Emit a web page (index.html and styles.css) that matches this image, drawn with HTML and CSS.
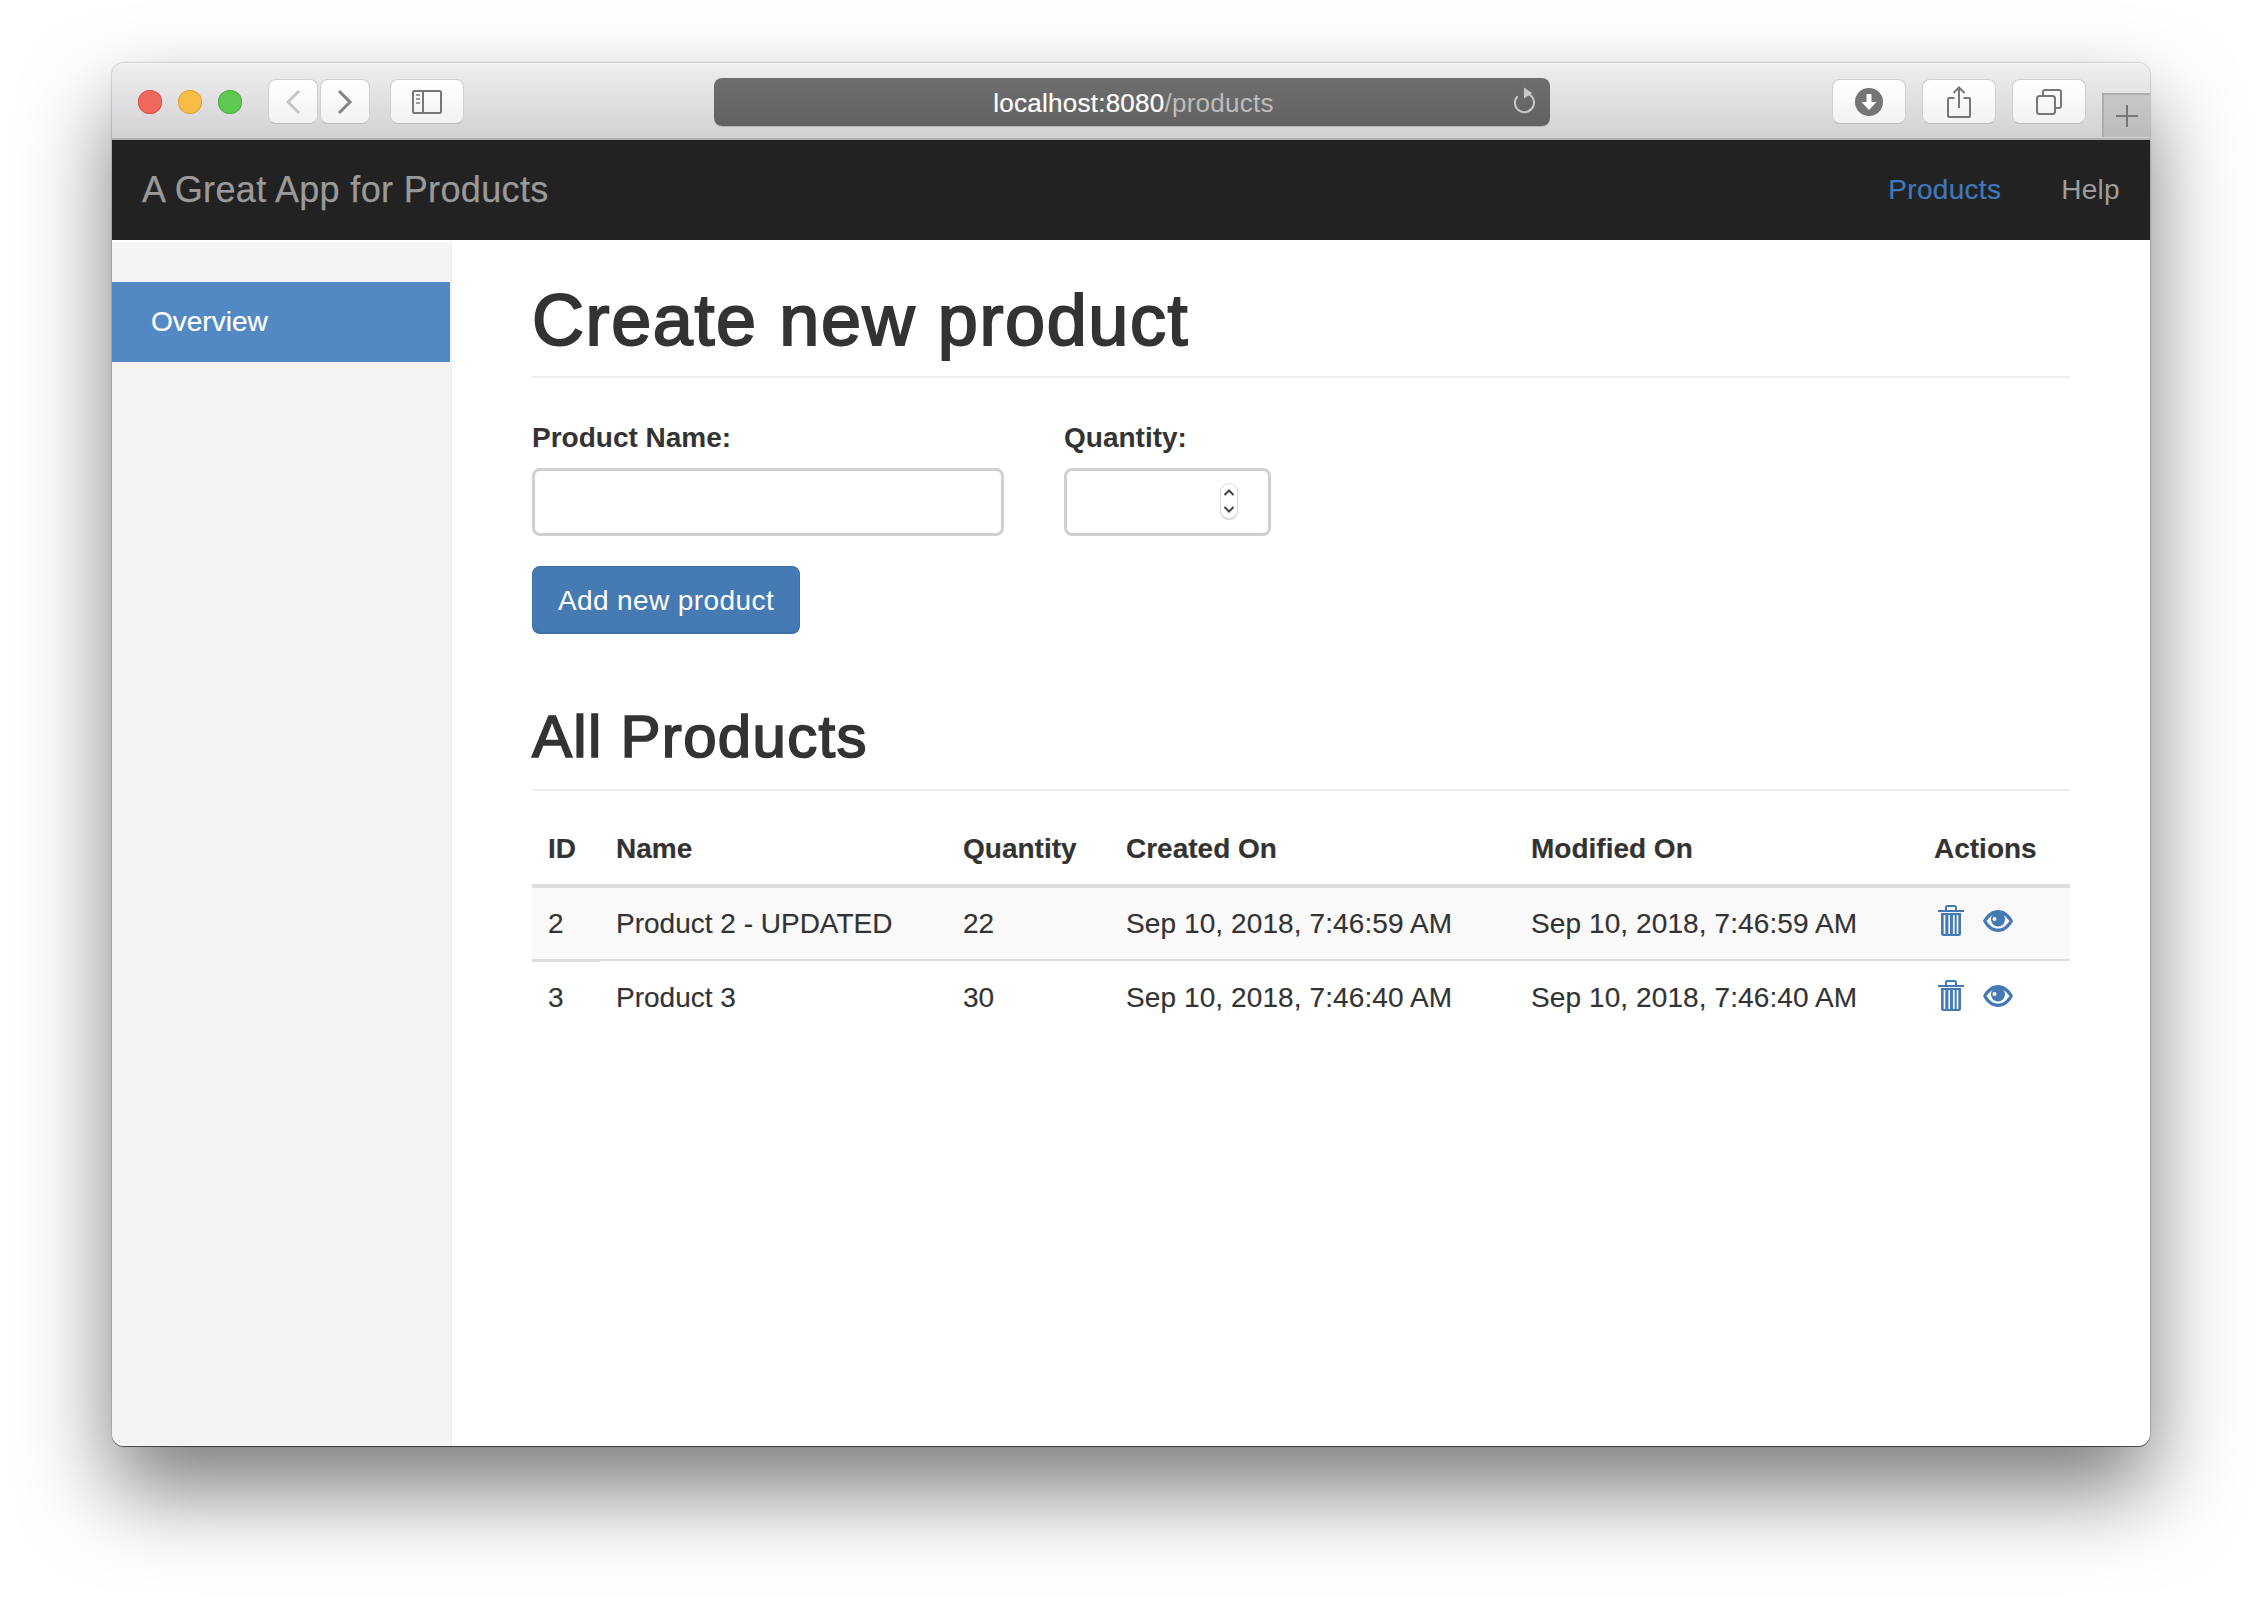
FILE: index.html
```html
<!DOCTYPE html>
<html lang="en">
<head>
<meta charset="utf-8">
<title>A Great App for Products</title>
<link rel="stylesheet" href="styles.css">
</head>
<body>
<div class="window">
  <div class="titlebar">
    <div class="lights">
      <span class="light red"></span><span class="light yellow"></span><span class="light green"></span>
    </div>
    <div class="nav-buttons">
      <div class="tool nav-btn"><svg width="16" height="26" viewBox="0 0 16 26"><path d="M14 2 3 13l11 11" fill="none" stroke="#c6c6c6" stroke-width="3"/></svg></div>
      <div class="tool nav-btn"><svg width="16" height="26" viewBox="0 0 16 26"><path d="M2 2l11 11L2 24" fill="none" stroke="#848484" stroke-width="3"/></svg></div>
    </div>
    <div class="tool side-btn"><svg width="30" height="24" viewBox="0 0 30 24"><rect x="1" y="1" width="28" height="22" rx="1.5" fill="none" stroke="#777" stroke-width="2"/><path d="M11 1v22" stroke="#777" stroke-width="2"/><path d="M4 5h4M4 9h4M4 13h4" stroke="#999" stroke-width="2"/></svg></div>
    <div class="urlbar">
      <span class="url-text">localhost:8080<span class="url-path">/products</span></span>
      <svg class="reload" width="24" height="28" viewBox="0 0 24 28"><path d="M14.500 6.200a9.500 9.500 0 1 1-8 3" fill="none" stroke="#c8c8c8" stroke-width="2"/><path d="M13 0.500l8 5.500-8 5.500z" fill="#c8c8c8"/></svg>
    </div>
    <div class="tools-right">
      <div class="tool wide"><svg width="28" height="28" viewBox="0 0 28 28"><circle cx="14" cy="14" r="14" fill="#757575"/><path d="M11.500 6h5v8h5L14 22 6.500 14h5z" fill="#fff"/></svg></div>
      <div class="tool wide"><svg width="24" height="32" viewBox="0 0 24 32"><path d="M7.500 12H2a1 1 0 0 0-1 1v17a1 1 0 0 0 1 1h20a1 1 0 0 0 1-1V13a1 1 0 0 0-1-1h-5.500M12 22V2M6.500 7 12 1.500 17.500 7" fill="none" stroke="#777" stroke-width="2"/></svg></div>
      <div class="tool wide"><svg width="26" height="26" viewBox="0 0 26 26"><rect x="1" y="7" width="18" height="18" rx="2.500" fill="none" stroke="#777" stroke-width="2"/><path d="M7 6V3a2 2 0 0 1 2-2h14a2 2 0 0 1 2 2v14a2 2 0 0 1-2 2h-3" fill="none" stroke="#777" stroke-width="2"/></svg></div>
    </div>
    <div class="newtab"><svg width="24" height="24" viewBox="0 0 24 24"><path d="M12 1v22M1 12h22" stroke="#777" stroke-width="2"/></svg></div>
  </div>

  <nav class="navbar">
    <span class="brand">A Great App for Products</span>
    <div class="nav-links">
      <a class="nav-link active">Products</a>
      <a class="nav-link">Help</a>
    </div>
  </nav>

  <div class="body-row">
    <aside class="sidebar">
      <div class="side-item">Overview</div>
    </aside>
    <main class="main">
      <h1 class="page-title">Create new product</h1>
      <form class="product-form">
        <div class="fields">
          <div class="field">
            <label class="field-label">Product Name:</label>
            <input class="text-input name-input" type="text">
          </div>
          <div class="field">
            <label class="field-label">Quantity:</label>
            <div class="qty-wrap">
              <input class="text-input qty-input" type="text">
              <span class="spinner">
                <svg width="12" height="26" viewBox="0 0 12 26"><path d="M1.500 7 6 2.500 10.500 7M1.500 19 6 23.500 10.500 19" fill="none" stroke="#444" stroke-width="2"/></svg>
              </span>
            </div>
          </div>
        </div>
        <button class="primary-btn" type="button">Add new product</button>
      </form>

      <h2 class="section-title">All Products</h2>
      <table class="products">
        <thead>
          <tr>
            <th class="col-id">ID</th>
            <th class="col-name">Name</th>
            <th class="col-qty">Quantity</th>
            <th class="col-created">Created On</th>
            <th class="col-modified">Modified On</th>
            <th class="col-actions">Actions</th>
          </tr>
        </thead>
        <tbody>
          <tr class="row-odd">
            <td>2</td>
            <td>Product 2 - UPDATED</td>
            <td>22</td>
            <td class="date">Sep 10, 2018, 7:46:59 AM</td>
            <td class="date">Sep 10, 2018, 7:46:59 AM</td>
            <td>
              <div class="actions">
                <svg class="icon-trash" width="26" height="31" viewBox="0 0 26 31"><path d="M0 6h26" stroke="#4479b3" stroke-width="2"/><path d="M8 5V2.500A1.500 1.500 0 0 1 9.500 1h7A1.500 1.500 0 0 1 18 2.500V5" fill="none" stroke="#4479b3" stroke-width="2"/><path d="M3 8h20v20.500a2.500 2.500 0 0 1-2.500 2.500h-15A2.500 2.500 0 0 1 3 28.500z" fill="#4479b3"/><path d="M6.500 10v19M11.200 10v19M15.800 10v19M19.500 10v19" stroke="#f3f6fa" stroke-width="1.700"/></svg>
                <svg class="icon-eye" width="30" height="24" viewBox="0 0 30 24"><path d="M0 12C4 4.500 9 1 15 1s11 3.500 15 11c-4 7.500-9 11-15 11S4 19.500 0 12z" fill="#4479b3"/><path d="M3.500 12C7 7.500 10 5 15 5s8 2.500 11.500 7C23 17 20 19.500 15 19.500S7 17 3.500 12z" fill="#f9f9f9"/><circle cx="15" cy="10.500" r="7" fill="#4479b3"/><circle cx="11.500" cy="10" r="2" fill="#f3f6fa"/></svg>
              </div>
            </td>
          </tr>
          <tr>
            <td class="cell-first">3</td>
            <td>Product 3</td>
            <td>30</td>
            <td class="date">Sep 10, 2018, 7:46:40 AM</td>
            <td class="date">Sep 10, 2018, 7:46:40 AM</td>
            <td>
              <div class="actions">
                <svg class="icon-trash" width="26" height="31" viewBox="0 0 26 31"><path d="M0 6h26" stroke="#4479b3" stroke-width="2"/><path d="M8 5V2.500A1.500 1.500 0 0 1 9.500 1h7A1.500 1.500 0 0 1 18 2.500V5" fill="none" stroke="#4479b3" stroke-width="2"/><path d="M3 8h20v20.500a2.500 2.500 0 0 1-2.500 2.500h-15A2.500 2.500 0 0 1 3 28.500z" fill="#4479b3"/><path d="M6.500 10v19M11.200 10v19M15.800 10v19M19.500 10v19" stroke="#f3f6fa" stroke-width="1.700"/></svg>
                <svg class="icon-eye" width="30" height="24" viewBox="0 0 30 24"><path d="M0 12C4 4.500 9 1 15 1s11 3.500 15 11c-4 7.500-9 11-15 11S4 19.500 0 12z" fill="#4479b3"/><path d="M3.500 12C7 7.500 10 5 15 5s8 2.500 11.500 7C23 17 20 19.500 15 19.500S7 17 3.500 12z" fill="#fff"/><circle cx="15" cy="10.500" r="7" fill="#4479b3"/><circle cx="11.500" cy="10" r="2" fill="#f3f6fa"/></svg>
              </div>
            </td>
          </tr>
        </tbody>
      </table>
    </main>
  </div>
</div>
</body>
</html>
```
FILE: styles.css
```css
* { box-sizing: border-box; }
html, body { margin: 0; height: 1606px; overflow: hidden; background: #fff; }
body {
  padding: 63px 112px 160px;
  font-family: "Liberation Sans", Arial, sans-serif;
  font-size: 28px;
  line-height: 40px;
  color: #333;
}
.window {
  width: 2038px;
  height: 1383px;
  display: flex;
  flex-direction: column;
  background: #fff;
  border-radius: 12px;
  overflow: hidden;
  box-shadow: 0 44px 88px rgba(0,0,0,.52), 0 1px 0 rgba(0,0,0,.5), 0 0 2px rgba(0,0,0,.45);
}
.titlebar {
  height: 77px;
  flex: none;
  display: flex;
  align-items: flex-start;
  padding-top: 16px;
  background: linear-gradient(#efeef0, #d3d1d4);
  border-bottom: 2px solid #b2b0b2;
  box-shadow: inset 0 1px 0 #f6f6f7;
}
.lights { display: flex; gap: 16px; margin: 11px 0 0 26px; }
.light { width: 24px; height: 24px; border-radius: 50%; display: block; }
.red { background: #f1685f; box-shadow: inset 0 0 0 1px #dc4f47; }
.yellow { background: #f8bd46; box-shadow: inset 0 0 0 1px #dfa23a; }
.green { background: #5fc853; box-shadow: inset 0 0 0 1px #4cae41; }
.tool {
  height: 45px;
  display: flex;
  align-items: center;
  justify-content: center;
  background: linear-gradient(#fff, #f2f2f2);
  border: 1px solid #d0cfd0;
  border-bottom-color: #bdbcbd;
  border-radius: 8px;
}
.nav-buttons { display: flex; gap: 2px; margin-left: 26px; }
.nav-btn { width: 50px; }
.side-btn { width: 74px; margin-left: 20px; }
.urlbar {
  width: 836px;
  height: 48px;
  margin: -1px 0 0 250px;
  display: flex;
  align-items: center;
  justify-content: center;
  position: relative;
  background: linear-gradient(#6e6e6e, #626262);
  border-radius: 8px;
  box-shadow: 0 1px 0 #b5b4b6;
  font-size: 26px;
  letter-spacing: .25px;
  color: #fff;
}
.url-text { padding: 2px 0 0 3px; -webkit-text-stroke: .2px #fff; }
.url-path { color: #bdbdbd; -webkit-text-stroke: 0; }
.reload { position: absolute; right: 15px; top: 9px; }
.tools-right { display: flex; gap: 16px; margin-left: 282px; }
.wide { width: 74px; }
.newtab {
  width: 48px;
  height: 44px;
  margin: 14px 0 0 auto;
  display: flex;
  align-items: center;
  justify-content: center;
  background: linear-gradient(#c8c6c8, #bdbbbd);
  border: 2px solid #aeacae;
  border-width: 2px 0 0 2px;
}
.navbar {
  height: 100px;
  flex: none;
  display: flex;
  align-items: center;
  justify-content: space-between;
  padding: 0 30px;
  background: #222;
}
.brand { font-size: 36px; color: #9a9a9a; letter-spacing: .35px; -webkit-text-stroke: .25px #9a9a9a; }
.nav-links { display: flex; gap: 60px; letter-spacing: .3px; }
.nav-link { color: #9d9d9d; }
.nav-link.active { color: #4079bb; -webkit-text-stroke: .2px #4079bb; }
.body-row { flex: 1; display: flex; min-height: 0; padding-top: 2px; }
.sidebar {
  width: 340px;
  flex: none;
  padding: 40px 1px 0 0;
  background: #f4f4f4;
  border-right: 1px solid #eee;
}
.side-item {
  height: 80px;
  display: flex;
  align-items: center;
  padding-left: 39px;
  background: #5288c4;
  color: #fff;
  -webkit-text-stroke: .2px #fff;
}
.main { flex: none; width: 1618px; padding: 38px 0 0 80px; }
.page-title {
  width: 1538px;
  margin: 0 0 40px;
  padding-bottom: 16px;
  border-bottom: 2px solid #eee;
  font-size: 72px;
  line-height: 80px;
  font-weight: 500;
  letter-spacing: 1.6px;
  -webkit-text-stroke: 2px #333;
}
.fields { display: flex; gap: 60px; }
.field-label { display: block; margin-bottom: 10px; font-weight: 700; }
.text-input {
  display: block;
  height: 68px;
  padding: 0;
  border: 3px solid #d0d0d0;
  border-radius: 8px;
  background: #fff;
  outline: none;
}
.name-input { width: 472px; }
.qty-input { width: 207px; }
.qty-wrap { position: relative; }
.spinner {
  position: absolute;
  left: 156px;
  top: 15px;
  width: 18px;
  height: 36px;
  display: flex;
  align-items: center;
  justify-content: center;
  background: #fff;
  border: 1px solid #ddd;
  border-radius: 9px;
  box-shadow: 0 1px 1px rgba(0,0,0,.2);
}
.primary-btn {
  display: block;
  width: 268px;
  height: 68px;
  margin-top: 30px;
  padding: 3px 0 0;
  background: #457ab3;
  border: 1px solid #3e6fa5;
  border-bottom-width: 2px;
  border-radius: 8px;
  font: inherit;
  letter-spacing: .4px;
  color: #fff;
}
.section-title {
  width: 1538px;
  margin: 70px 0 21px;
  padding-bottom: 19px;
  border-bottom: 2px solid #eee;
  font-size: 60px;
  line-height: 66px;
  font-weight: 500;
  letter-spacing: 1.3px;
  -webkit-text-stroke: 1.7px #333;
}
.products { width: 1538px; table-layout: fixed; border-collapse: separate; border-spacing: 0; -webkit-text-stroke: .15px #333; }
.products th, .products td { padding: 0 16px; text-align: left; }
.products th { height: 76px; padding-top: 1px; border-bottom: 4px solid #ddd; font-weight: 700; }
.products td { height: 72px; }
.products tr + tr td { height: 74px; padding-top: 2px; border-top: 2px solid #ddd; }
.row-odd td { background: #f9f9f9; height: 71px; }
.products tbody .row-odd td { height: 71px; }
.products .cell-first { box-shadow: inset 0 1px 0 #ddd; }
.date { letter-spacing: .1px; }
.col-id { width: 68px; }
.col-name { width: 347px; }
.col-qty { width: 163px; }
.col-created { width: 405px; }
.col-modified { width: 403px; }
.col-actions { width: 152px; }
.actions { display: flex; align-items: center; gap: 19px; padding: 0 0 6px 4px; }
.icon-eye { margin-top: 1px; }
```
